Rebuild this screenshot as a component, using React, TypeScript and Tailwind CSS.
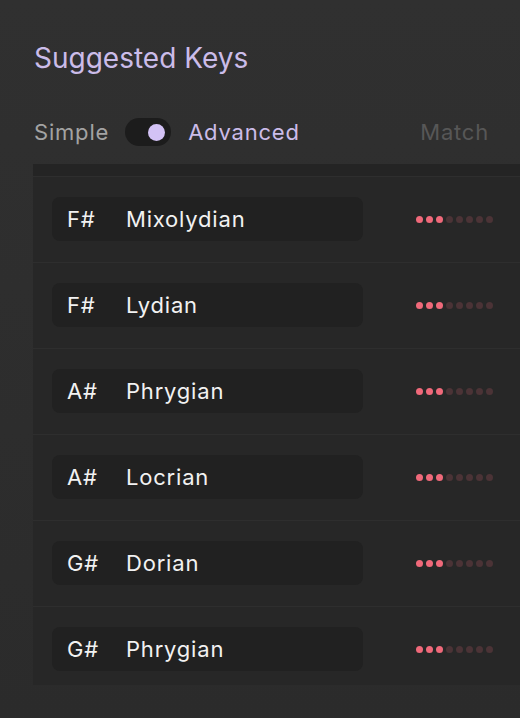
import React from "react";

const rows: [string, string][] = [
  ["F#", "Mixolydian"],
  ["F#", "Lydian"],
  ["A#", "Phrygian"],
  ["A#", "Locrian"],
  ["G#", "Dorian"],
  ["G#", "Phrygian"],
];

function Dots({ n }: { n: number }) {
  return (
    <div className="flex gap-[3px] ml-[53px]">
      {Array.from({ length: 8 }).map((_, i) => (
        <div
          key={i}
          className={
            i < n
              ? "w-[7px] h-[7px] rounded-full bg-[#f0697a]"
              : "w-[7px] h-[7px] rounded-full bg-[#4b3336]"
          }
        />
      ))}
    </div>
  );
}

export default function App() {
  return (
    <div className="w-[520px] h-[718px] overflow-hidden bg-gradient-to-b from-[#303030] to-[#2b2b2b] font-['Inter',sans-serif]">
      <div className="pl-[34px] pt-[42px]">
        <h1 className="text-[28px] leading-[32px] text-[#cbbce9] font-normal tracking-[0px]">
          Suggested Keys
        </h1>
        <div className="mt-[44px] flex items-center h-[28px] text-[22px] tracking-[0.8px]">
          <span className="text-[#a3a3a3]">Simple</span>
          <div className="ml-[16px] w-[46px] h-[28px] rounded-full bg-[#1c1c1c] flex items-center justify-end pr-[6px]">
            <div className="w-[17px] h-[17px] rounded-full bg-[#d3c2f5]" />
          </div>
          <span className="ml-[17px] text-[#cbbce9]">Advanced</span>
          <span className="ml-auto mr-[31px] text-[#575757]">Match</span>
        </div>
      </div>
      <div className="ml-[33px] mt-[18px] h-[521px] overflow-hidden bg-[#272727]">
        <div className="h-[12px] bg-[#242424]" />
        {rows.map(([k, m], i) => (
          <div
            key={i}
            className="border-t border-[#2e2e2e] pt-[20px] pb-[21px] pl-[19px] flex items-center"
          >
            <div className="w-[311px] h-[44px] rounded-[8px] bg-[#212121] flex items-center pl-[15px] text-[22px] tracking-[0.8px] text-[#f2f2f2]">
              <span className="w-[59px]">{k}</span>
              <span>{m}</span>
            </div>
            <Dots n={3} />
          </div>
        ))}
      </div>
    </div>
  );
}
